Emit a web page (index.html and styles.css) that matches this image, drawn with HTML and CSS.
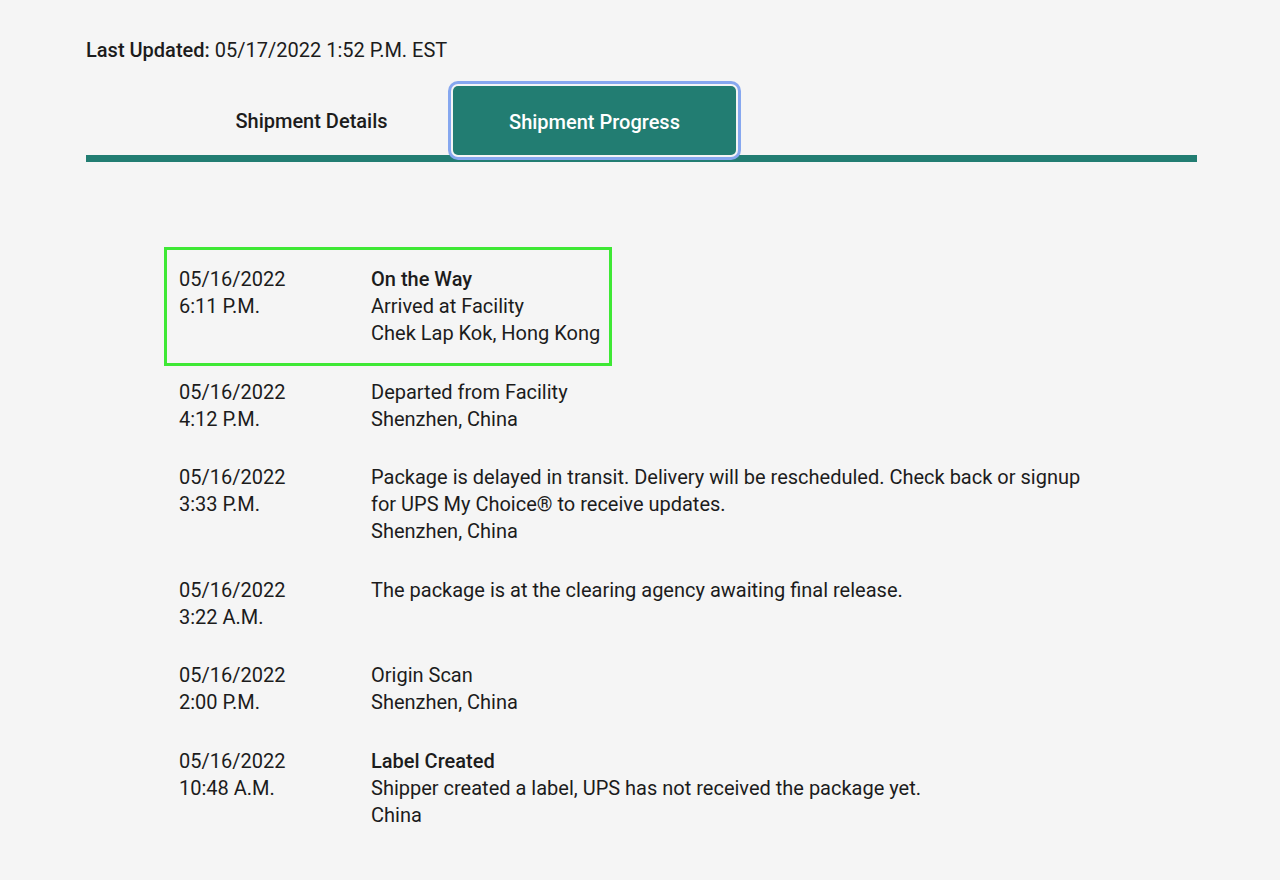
FILE: index.html
```html
<!DOCTYPE html>
<html lang="en">
<head>
  <meta charset="UTF-8">
  <meta name="viewport" content="width=device-width, initial-scale=1.0">
  <link rel="stylesheet" href="styles.css">
</head>
<body>

<div id="page">
  <div class="last-updated"><b>Last Updated:</b> 05/17/2022 1:52 P.M. EST</div>

  <div class="tabs">
    <button class="tab">Shipment Details</button>
    <button class="tab active">Shipment Progress</button>
  </div>

  <div class="progress-list">
    <div class="progress-row selected">
      <div class="when">05/16/2022<br>6:11 P.M.</div>
      <div class="what"><b>On the Way</b><br>Arrived at Facility<br>Chek Lap Kok, Hong Kong</div>
    </div>
    <div class="progress-row">
      <div class="when">05/16/2022<br>4:12 P.M.</div>
      <div class="what">Departed from Facility<br>Shenzhen, China</div>
    </div>
    <div class="progress-row">
      <div class="when">05/16/2022<br>3:33 P.M.</div>
      <div class="what">Package is delayed in transit. Delivery will be rescheduled. Check back or signup<br>for UPS My Choice® to receive updates.<br>Shenzhen, China</div>
    </div>
    <div class="progress-row">
      <div class="when">05/16/2022<br>3:22 A.M.</div>
      <div class="what">The package is at the clearing agency awaiting final release.</div>
    </div>
    <div class="progress-row">
      <div class="when">05/16/2022<br>2:00 P.M.</div>
      <div class="what">Origin Scan<br>Shenzhen, China</div>
    </div>
    <div class="progress-row">
      <div class="when">05/16/2022<br>10:48 A.M.</div>
      <div class="what"><b>Label Created</b><br>Shipper created a label, UPS has not received the package yet.<br>China</div>
    </div>
  </div>
</div>

</body>
</html>
```

FILE: styles.css
```css
body {
  font-family: Roboto, 'Liberation Sans', sans-serif;
  margin: 0;
  background-color: #f5f5f5;
  color: #1c1c1c;
}

#page {
  padding: 38px 83px 0 86px;
}

.last-updated {
  font-size: 20px;
  line-height: 25px;
}

.last-updated b {
  font-weight: 500;
}

/* tab strip */
.tabs {
  display: flex;
  padding-left: 84px;
  margin-top: 23px;
  border-bottom: 7px solid #227d72;
}

.tab {
  width: 283px;
  height: 69px;
  font-family: inherit;
  font-size: 20px;
  font-weight: 500;
  color: #1c1c1c;
  background: none;
  border: none;
  border-radius: 4px 4px 0 0;
  padding: 0;
  cursor: pointer;
}

.tab.active {
  background-color: #227d72;
  color: #fff;
  box-shadow: 0 0 0 2px #f5f5f5, 0 0 0 5px #86a7ef;
  border-radius: 5px;
  position: relative;
  z-index: 1;
  margin-bottom: -3px;
  padding-top: 2px;
}

/* progress rows */
.progress-list {
  padding: 88px 0 40px 81px;
  display: flex;
  flex-direction: column;
  align-items: flex-start;
}

.progress-row {
  display: flex;
  font-size: 20px;
  line-height: 27px;
  padding: 16px 9px 15.6px 12px;
}

.progress-row b {
  font-weight: 500;
}

.progress-row.selected {
  outline: 3px solid #3ee835;
  outline-offset: 0;
}

.when {
  width: 192px;
  flex-shrink: 0;
}
```
